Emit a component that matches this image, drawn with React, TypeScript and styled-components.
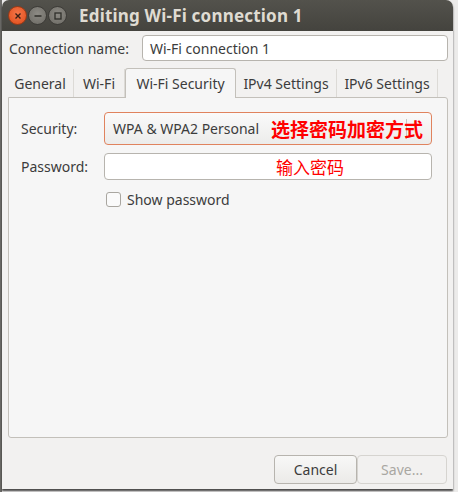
import React from "react";
import styled, { createGlobalStyle } from "styled-components";

const GlobalStyle = createGlobalStyle`
    html, body {
        margin: 0;
        padding: 0;
        background: #e9e8e6;
    }
    * { box-sizing: border-box; }
`

const Screen = styled.div`
    width: 458px;
    height: 492px;
    display: flex;
    align-items: flex-start;
    background: linear-gradient(to right, #6c6b68 0px, #6c6b68 2px, #ecebea 2px);
    overflow: hidden;
    font-family: "Noto Sans", "Open Sans", "Noto Sans CJK SC", sans-serif;
`

const Window = styled.div`
    margin-left: 2px;
    width: 451px;
    height: 489px;
    display: flex;
    flex-direction: column;
    background: #f2f1f0;
    border-radius: 7px 7px 0 0;
    box-shadow: 0 2px 2px rgba(0, 0, 0, 0.7);
    overflow: hidden;
`

const TitleBar = styled.div`
    height: 31px;
    flex: none;
    display: flex;
    align-items: center;
    padding-left: 6px;
    gap: 1px;
    background: linear-gradient(#53524c, #44433e);
`

interface CircleProps {
    close?: boolean;
}
const WinButton = styled.div<CircleProps>`
    width: 19px;
    height: 19px;
    border-radius: 50%;
    display: flex;
    align-items: center;
    justify-content: center;
    background: ${p => p.close ? "radial-gradient(circle at 50% 40%, #f4774a, #de4a18)" : "radial-gradient(circle at 50% 40%, #8d8b85, #6b6963)"};
    border: 1px solid ${p => p.close ? "#9c3a16" : "#3d3c38"};
`

const Title = styled.div`
    margin-left: 11px;
    color: #dfdbd2;
    font-weight: bold;
    font-size: 17px;
    letter-spacing: 0.2px;
`

const Body = styled.div`
    flex: 1;
    display: flex;
    flex-direction: column;
    padding: 4px 5px 0 4px;
`

const NameRow = styled.div`
    display: flex;
    align-items: center;
    gap: 13px;
    padding-left: 3px;
`

const Label = styled.span`
    color: #3c3c3c;
    font-size: 14px;
`

interface EntryProps {
    focus?: boolean;
}
const Entry = styled.div<EntryProps>`
    flex: 1;
    height: 26px;
    display: flex;
    align-items: center;
    padding-left: 7px;
    background: #fff;
    border: 1px solid ${p => p.focus ? "#e0835e" : "#b7b4ae"};
    border-radius: 4px;
    font-size: 14px;
    color: #3c3c3c;
`

const TabStrip = styled.div`
    margin-top: 7px;
    display: flex;
    align-items: flex-end;
    height: 29px;
    padding-left: 1px;
    position: relative;
    z-index: 1;
`

interface TabProps {
    active?: boolean;
    w: number;
}
const Tab = styled.div<TabProps>`
    width: ${p => p.w}px;
    height: ${p => p.active ? 29 : 28}px;
    display: flex;
    align-items: center;
    justify-content: center;
    font-size: 14px;
    color: #3c3c3c;
    border-right: 1px solid ${p => p.active ? "#c3c0ba" : "#dcdad6"};
    ${p => p.active ? `
        background: #f6f6f6;
        border: 1px solid #c3c0ba;
        border-bottom: none;
        border-radius: 3px 3px 0 0;
        margin-bottom: -1px;
        height: 30px;
    ` : ""}
`

const Panel = styled.div`
    margin-left: 2px;
    width: 440px;
    height: 341px;
    background: #f6f6f6;
    border: 1px solid #c3c0ba;
    border-radius: 0 3px 3px 3px;
    display: flex;
    flex-direction: column;
    gap: 8px;
    padding: 14px 13px 0 12px;
`

const FieldRow = styled.div`
    display: flex;
    align-items: center;
`

const FieldLabel = styled.span`
    width: 83px;
    color: #3c3c3c;
    font-size: 14px;
`

const Combo = styled.div`
    width: 328px;
    height: 33px;
    display: flex;
    align-items: center;
    padding-left: 8px;
    background: linear-gradient(#fafafa, #ececeb);
    border: 1px solid #e0835e;
    border-radius: 4px;
    position: relative;
    font-size: 14px;
    color: #3c3c3c;
`

const ComboSep = styled.div`
    position: absolute;
    right: 24px;
    top: 6px;
    bottom: 5px;
    width: 1px;
    background: #c9c6c1;
`

interface NoteProps {
    bold?: boolean;
}
const Note = styled.span<NoteProps>`
    color: #ff0000;
    font-family: "Noto Sans CJK SC", sans-serif;
    font-size: ${p => p.bold ? 19 : 17}px;
    font-weight: ${p => p.bold ? "bold" : "normal"};
    position: relative;
`

const PasswordEntry = styled.div`
    width: 328px;
    height: 27px;
    display: flex;
    align-items: center;
    padding-left: 171px;
    background: #fff;
    border: 1px solid #b7b4ae;
    border-radius: 4px;
`

const CheckRow = styled.label`
    display: flex;
    align-items: center;
    gap: 6px;
    margin-left: 85px;
    margin-top: 2px;
    font-size: 14px;
    color: #3c3c3c;
`

const CheckBox = styled.span`
    width: 15px;
    height: 15px;
    background: #fafafa;
    border: 1px solid #a9a6a0;
    border-radius: 3px;
`

const ButtonRow = styled.div`
    margin-top: 17px;
    display: flex;
    justify-content: flex-end;
    padding-right: 1px;
`

interface ButtonProps {
    disabled?: boolean;
}
const DialogButton = styled.div<ButtonProps>`
    height: 29px;
    display: flex;
    align-items: center;
    justify-content: center;
    font-size: 14px;
    color: ${p => p.disabled ? "#a9a7a2" : "#3c3c3c"};
    background: ${p => p.disabled ? "#f2f1f0" : "linear-gradient(#f8f8f7, #ebeae8)"};
    border: 1px solid ${p => p.disabled ? "#d6d4d0" : "#b7b4ae"};
    border-radius: 4px;
`

export default function App() {
    return (
        <>
            <GlobalStyle />
            <Screen>
                <Window>
                    <TitleBar>
                        <WinButton close>
                            <svg width="8" height="8" viewBox="0 0 8 8">
                                <path d="M1.5 1.5 L6.5 6.5 M6.5 1.5 L1.5 6.5" stroke="#3a1f14" strokeWidth="1.4" />
                            </svg>
                        </WinButton>
                        <WinButton>
                            <svg width="10" height="10" viewBox="0 0 10 10">
                                <path d="M1.5 5 H8.5" stroke="#2f2e2a" strokeWidth="1.4" />
                            </svg>
                        </WinButton>
                        <WinButton>
                            <svg width="10" height="10" viewBox="0 0 10 10">
                                <rect x="2" y="2" width="6" height="6" fill="none" stroke="#2f2e2a" strokeWidth="1.3" />
                            </svg>
                        </WinButton>
                        <Title>Editing Wi-Fi connection 1</Title>
                    </TitleBar>
                    <Body>
                        <NameRow>
                            <Label>Connection name:</Label>
                            <Entry>Wi-Fi connection 1</Entry>
                        </NameRow>
                        <TabStrip>
                            <Tab w={67}>General</Tab>
                            <Tab w={51}>Wi-Fi</Tab>
                            <Tab w={111} active>Wi-Fi Security</Tab>
                            <Tab w={101}>IPv4 Settings</Tab>
                            <Tab w={101}>IPv6 Settings</Tab>
                        </TabStrip>
                        <Panel>
                            <FieldRow>
                                <FieldLabel>Security:</FieldLabel>
                                <Combo>
                                    WPA &amp; WPA2 Personal
                                    <ComboSep />
                                    <Note bold style={{ marginLeft: 12 }}>选择密码加密方式</Note>
                                </Combo>
                            </FieldRow>
                            <FieldRow>
                                <FieldLabel>Password:</FieldLabel>
                                <PasswordEntry>
                                    <Note>输入密码</Note>
                                </PasswordEntry>
                            </FieldRow>
                            <CheckRow>
                                <CheckBox />
                                Show password
                            </CheckRow>
                        </Panel>
                        <ButtonRow>
                            <DialogButton style={{ width: 83 }}>Cancel</DialogButton>
                            <DialogButton disabled style={{ width: 90 }}>Save...</DialogButton>
                        </ButtonRow>
                    </Body>
                </Window>
            </Screen>
        </>
    );
}
